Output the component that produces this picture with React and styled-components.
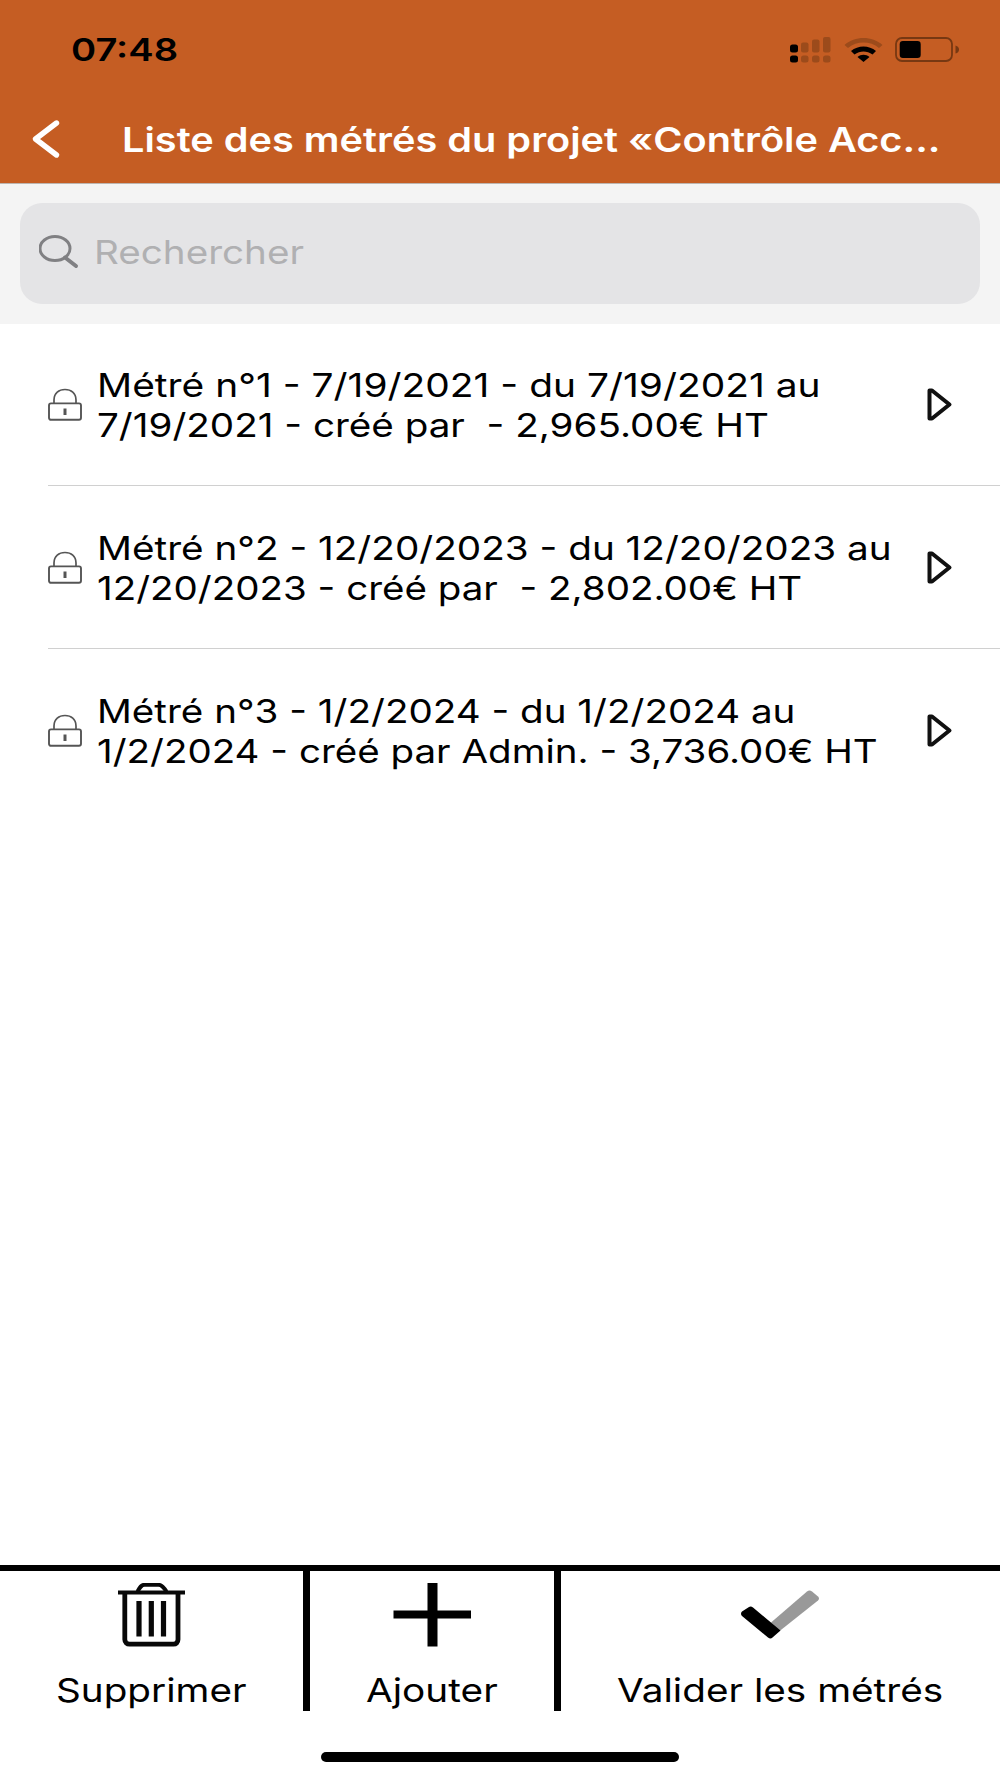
import React, { useLayoutEffect, useRef, useState } from "react";
import styled, { createGlobalStyle } from "styled-components";

const rows = [
  [
    { text: "Métré n°1 - 7/19/2021 - du 7/19/2021 au", width: 724 },
    { text: "7/19/2021 - créé par  - 2,965.00€ HT", width: 672.5 },
  ],
  [
    { text: "Métré n°2 - 12/20/2023 - du 12/20/2023 au", width: 794.5 },
    { text: "12/20/2023 - créé par  - 2,802.00€ HT", width: 705 },
  ],
  [
    { text: "Métré n°3 - 1/2/2024 - du 1/2/2024 au", width: 698 },
    { text: "1/2/2024 - créé par Admin. - 3,736.00€ HT", width: 781 },
  ],
];

// Widens its text to the given width, the letters keep their height
function Wide({ width, children }) {
  const ref = useRef(null);
  const [scale, setScale] = useState(1);

  useLayoutEffect(() => {
    setScale(width / ref.current.offsetWidth);
  }, [width, children]);

  return (
    <WideBox $width={width}>
      <WideText ref={ref} style={{ transform: `scaleX(${scale})` }}>
        {children}
      </WideText>
    </WideBox>
  );
}

function Signal() {
  return (
    <svg width="41" height="27" viewBox="0 0 41 27">
      <rect x="0" y="7.5" width="8" height="8" rx="2.5" />
      <rect x="0" y="18.5" width="8" height="7" rx="2.5" />
      <g fill="#9c4b1b">
        <rect x="11" y="5.5" width="7.5" height="10" rx="2" />
        <rect x="22" y="2.5" width="7.5" height="13" rx="2" />
        <rect x="33" y="0" width="7.5" height="15.5" rx="2" />
        <rect x="11" y="18.5" width="7.5" height="7" rx="2.5" />
        <rect x="22" y="18.5" width="7.5" height="7" rx="2.5" />
        <rect x="33" y="18.5" width="7.5" height="7" rx="2.5" />
      </g>
    </svg>
  );
}

function Wifi() {
  return (
    <svg width="39" height="24" viewBox="0 0 39 24">
      <path
        d="M0.5 7C11 -2.2 28 -2.2 38.5 7L35 10C26 2.8 13 2.8 4 10Z"
        fill="#9c4b1b"
      />
      <path d="M7 13C14 7 25 7 32 13L28.5 16.5C23 12.5 16 12.5 10.5 16.5Z" />
      <path d="M13.5 19C17 16 22 16 25.5 19L19.5 24Z" />
    </svg>
  );
}

function Battery() {
  return (
    <svg width="65" height="26" viewBox="0 0 65 26">
      <rect
        x="1"
        y="1"
        width="56"
        height="23"
        rx="6"
        fill="none"
        stroke="#773812"
        strokeWidth="1.8"
      />
      <rect x="4.7" y="4" width="21" height="17" rx="3.2" />
      <path d="M60.5 8.5Q64 9.5 64 12.5T60.5 16.5Z" fill="#773812" />
    </svg>
  );
}

function Lock() {
  return (
    <svg width="34" height="33" viewBox="0 0 34 33" fill="none" stroke="#555">
      <path d="M6 15V12C6 5 11 1.5 17 1.5S28 5 28 12V15" strokeWidth="1.7" />
      <rect x="1" y="15.4" width="32" height="16.4" rx="2" strokeWidth="1.9" />
      <path d="M17 20.5V27" strokeWidth="3" />
    </svg>
  );
}

function App() {
  return (
    <>
      <GlobalStyle />
      <Screen>
        <Header>
          <StatusBar>
            <Wide width={107}>07:48</Wide>
            <StatusIcons>
              <Signal />
              <Wifi />
              <Battery />
            </StatusIcons>
          </StatusBar>
          <TitleBar>
            <svg width="30" height="40" viewBox="0 0 30 40">
              <path
                d="M26.5 4L5.5 20L26.5 36"
                fill="none"
                stroke="#fff"
                strokeWidth="5.4"
                strokeLinecap="round"
                strokeLinejoin="round"
              />
            </svg>
            <Title>
              <Wide width={819}>Liste des métrés du projet «Contrôle Acc...</Wide>
            </Title>
          </TitleBar>
        </Header>
        <SearchArea>
          <SearchField>
            <svg width="40" height="34" viewBox="0 0 40 34" fill="none" stroke="#808083">
              <ellipse cx="16" cy="13.5" rx="15" ry="12" strokeWidth="3" />
              <path d="M26 22.5L37 31" strokeWidth="4" strokeLinecap="round" />
            </svg>
            <Wide width={210.5}>Rechercher</Wide>
          </SearchField>
        </SearchArea>
        <List>
          {rows.map((lines, index) => (
            <Row key={index} $last={index === rows.length - 1}>
              <Lock />
              <Description>
                {lines.map((line) => (
                  <Wide key={line.text} width={line.width}>
                    {line.text}
                  </Wide>
                ))}
              </Description>
              <svg width="26" height="34" viewBox="0 0 26 34">
                <path
                  d="M2.5 3.5L5 3.5L22.5 17.5L5 31.5L2.5 31.5Z"
                  fill="#fff"
                  stroke="#111"
                  strokeWidth="4"
                  strokeLinejoin="round"
                />
              </svg>
            </Row>
          ))}
        </List>
        <Toolbar>
          <Action $width="303px">
            <svg width="68" height="64" viewBox="0 0 68 64" fill="none" stroke="#080808">
              <path d="M19.5 8.5C22 4 23.5 1.8 26.5 1.8H40.5C43.5 1.8 45.5 4 48.5 8.5" strokeWidth="4" />
              <path d="M0 9.5H67" strokeWidth="4.2" />
              <path d="M6.8 10V56.5C6.8 59.5 9 61.2 11.5 61.2H55.5C58 61.2 60 59.5 60 56.5V10" strokeWidth="4.8" />
              <path d="M21 18V53.5M33.3 18V53.5M45.5 18V53.5" strokeWidth="5.2" />
            </svg>
            <Wide width={191}>Supprimer</Wide>
          </Action>
          <Divider />
          <Action $width="244px">
            <svg width="78" height="64" viewBox="0 0 78 64">
              <path d="M0.5 27.5H34.5V0H44.5V27.5H78V35.5H44.5V63.5H34.5V35.5H0.5Z" />
            </svg>
            <Wide width={131.5}>Ajouter</Wide>
          </Action>
          <Divider />
          <Action $width="438px">
            <svg width="78" height="64" viewBox="0 0 78 64">
              <path
                d="M30 39.5L66 8.5Q68.5 6.5 71 8.5L77 13.5Q79 15.5 77 17.5L38 48.5Z"
                fill="#999"
              />
              <path d="M1 28.5L8 24Q10 23 12 24.5L39.5 47.5L31.5 54.5Q29.5 56.5 27 54.5L1 33Q-1 30.5 1 28.5Z" />
            </svg>
            <Wide width={326}>Valider les métrés</Wide>
          </Action>
        </Toolbar>
        <HomeIndicator />
      </Screen>
    </>
  );
}

const GlobalStyle = createGlobalStyle`
  * {
    box-sizing: border-box;
  }
  body {
    margin: 0;
    background-color: #fff;
    font-family: Inter, "Liberation Sans", sans-serif;
    font-size: 33px;
    line-height: 40px;
    color: #000;
  }
  svg {
    display: block;
    flex-shrink: 0;
  }
`;

const Screen = styled.div`
  display: flex;
  flex-direction: column;
  width: 1000px;
  height: 1778px;
  overflow: hidden;
`;

const WideBox = styled.div`
  width: ${(props) => props.$width}px;
  flex-shrink: 0;
`;

const WideText = styled.span`
  display: inline-block;
  vertical-align: top;
  white-space: pre;
  transform-origin: left center;
`;

const Header = styled.header`
  height: 183.5px;
  background-color: #c55d23;
  border-bottom: 1px solid #bdb5b0;
`;

const StatusBar = styled.div`
  display: flex;
  align-items: center;
  justify-content: space-between;
  height: 100px;
  padding: 0 40px 0 71px;
  font-size: 31px;
  font-weight: 600;
`;

const StatusIcons = styled.div`
  display: flex;
  align-items: center;
  gap: 12.5px;
`;

const TitleBar = styled.div`
  display: flex;
  align-items: center;
  height: 78px;
  padding-left: 30px;
`;

const Title = styled.div`
  margin-left: 61.5px;
  padding-top: 2px;
  font-size: 33.5px;
  font-weight: 600;
  color: #fff;
`;

const SearchArea = styled.div`
  height: 140px;
  padding: 19px 20px;
  background-color: #f4f4f4;
`;

const SearchField = styled.div`
  display: flex;
  align-items: center;
  gap: 15px;
  height: 101px;
  padding: 0 0 2px 18.5px;
  border-radius: 22px;
  background-color: #e4e4e6;
  color: #b0b0b2;
`;

const List = styled.main`
  flex: 1;
`;

const Row = styled.div`
  display: flex;
  align-items: center;
  height: 162.7px;
  margin-left: 48px;
  border-bottom: ${(props) => (props.$last ? "none" : "1.5px solid #d0d0d0")};
`;

const Description = styled.div`
  width: 845px;
  padding: 1.5px 0 0 15px;
`;

const Toolbar = styled.nav`
  display: flex;
  height: 146px;
  border-top: 6px solid #000;
`;

const Action = styled.div`
  display: flex;
  flex-direction: column;
  align-items: center;
  gap: 23px;
  width: ${(props) => props.$width};
  padding-top: 11.5px;
`;

const Divider = styled.div`
  width: 7px;
  background-color: #000;
`;

const HomeIndicator = styled.div`
  width: 358px;
  height: 10px;
  margin: 41px auto 16px;
  border-radius: 5px;
  background-color: #000;
`;

export default App;
